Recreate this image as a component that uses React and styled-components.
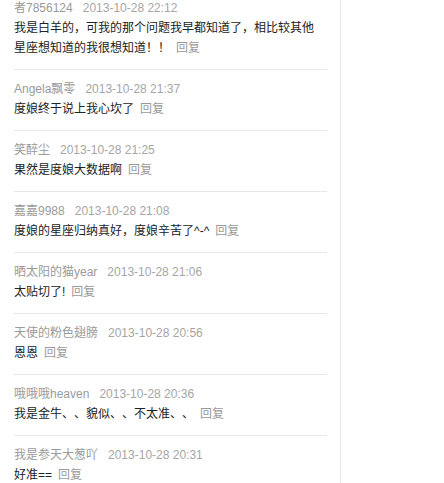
import React from 'react';
import styled, { createGlobalStyle } from 'styled-components';

const comments = [
  { name: '者7856124', time: '2013-10-28 22:12', text: '我是白羊的，可我的那个问题我早都知道了，相比较其他星座想知道的我很想知道！！' },
  { name: 'Angela飘零', time: '2013-10-28 21:37', text: '度娘终于说上我心坎了' },
  { name: '笑醉尘', time: '2013-10-28 21:25', text: '果然是度娘大数据啊' },
  { name: '嘉嘉9988', time: '2013-10-28 21:08', text: '度娘的星座归纳真好，度娘辛苦了^-^' },
  { name: '晒太阳的猫year', time: '2013-10-28 21:06', text: '太贴切了!' },
  { name: '天使的粉色翅膀', time: '2013-10-28 20:56', text: '恩恩' },
  { name: '哦哦哦heaven', time: '2013-10-28 20:36', text: '我是金牛、、貌似、、不太准、、' },
  { name: '我是参天大葱吖', time: '2013-10-28 20:31', text: '好准==' },
];

const GlobalStyle = createGlobalStyle`
  html, body {
    margin: 0;
    padding: 0;
    background: #fff;
  }
  body {
    font-family: "Liberation Sans", "Noto Sans CJK SC", sans-serif;
    font-size: 12px;
    text-spacing-trim: space-all;
  }
`;

const Page = styled.div`
  display: flex;
  height: 100vh;
  overflow: hidden;
`;

const Column = styled.div`
  width: 340px;
  border-right: 1px solid #e6e6e6;
  box-shadow: -3px 0 0 #f6f6f6;
`;

const List = styled.ul`
  list-style: none;
  margin: -11px 0 0;
  padding: 0 13px 0 14px;
`;

const Entry = styled.li`
  padding: 9px 0 11px;
  border-bottom: 1px solid #e8e8e8;
`;

const Meta = styled.div`
  display: flex;
  line-height: 20px;
  color: #9a9a9a;
  white-space: nowrap;
`;

const Time = styled.span`
  margin-left: 10px;
  color: #a6a6a6;
`;

const Text = styled.p`
  margin: 0;
  padding-right: 12px;
  line-height: 20px;
  color: #222;
`;

const Reply = styled.a`
  margin-left: 6px;
  color: #9a9a9a;
  text-decoration: none;
  cursor: pointer;
`;

const App = () => {
  return (
    <Page>
      <GlobalStyle />
      <Column>
        <List>
          {comments.map((c) => (
            <Entry key={c.name}>
              <Meta>
                {c.name}
                <Time>{c.time}</Time>
              </Meta>
              <Text>
                {c.text}
                <Reply>回复</Reply>
              </Text>
            </Entry>
          ))}
        </List>
      </Column>
    </Page>
  );
};

export default App;
